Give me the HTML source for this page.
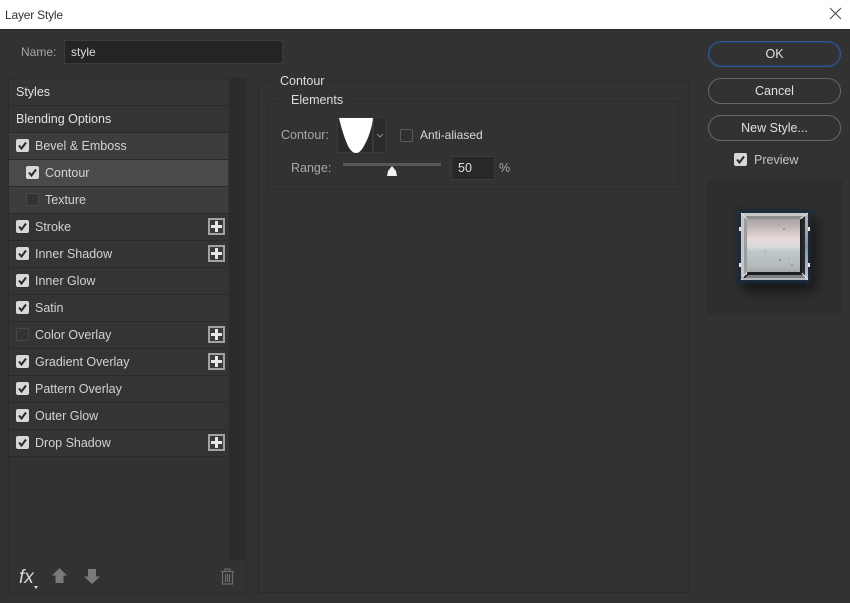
<!DOCTYPE html>
<html><head><meta charset="utf-8">
<style>
html,body{margin:0;padding:0;width:850px;height:603px;overflow:hidden;background:#323232;}
body{position:relative;font-family:"Liberation Sans",sans-serif;font-size:12.5px;color:#d4d4d4;}
.a{position:absolute;white-space:nowrap;}
#title{left:0;top:0;width:850px;height:29px;background:#fff;}
.row{position:absolute;left:9px;width:219px;height:26px;background:#343434;border-bottom:1px solid #2a2a2a;}
.row span{position:absolute;top:5px;line-height:16px;white-space:nowrap;color:#d2d2d2;}
.cb{position:absolute;top:6px;width:13px;height:13px;border-radius:2px;background:#d8d8d8;}
.cb svg{position:absolute;left:0;top:0;}
.cb.off{background:#333;border:1px solid #484848;width:11px;height:11px;}
.plus{position:absolute;left:199px;top:4px;width:13px;height:13px;border:2px solid #a2a2a2;background:#3a3a3a;}
.plus:before{content:"";position:absolute;left:1px;top:5px;width:11px;height:3px;background:#e8e8e8;}
.plus:after{content:"";position:absolute;left:5px;top:1px;width:3px;height:11px;background:#e8e8e8;}
.btn{position:absolute;left:708px;width:131px;height:24px;border:1px solid #666;border-radius:13px;text-align:center;line-height:24px;color:#e0e0e0;}
.box{position:absolute;border:1px solid #2b2b2b;box-sizing:border-box;}
</style></head><body>
<div class="a" id="title"></div>
<div class="a" style="left:5px;top:7px;color:#333;font-size:12px;letter-spacing:-.2px;line-height:16px;">Layer Style</div>
<svg class="a" style="left:829px;top:7px" width="13" height="13" viewBox="0 0 13 13"><path d="M1 1L12 12M12 1L1 12" stroke="#444" stroke-width="1" fill="none"/></svg>
<div class="a" style="left:0;top:29px;width:850px;height:1px;background:#262626;"></div>

<div class="a" style="left:21px;top:44px;color:#a6a6a6;line-height:16px;font-size:12px;">Name:</div>
<div class="a" style="left:64px;top:40px;width:217px;height:22px;background:#242424;border:1px solid #3c3c3c;"></div>
<div class="a" style="left:71px;top:44px;color:#dcdcdc;line-height:16px;font-size:12px;">style</div>

<div class="box" style="left:8px;top:78px;width:239px;height:516px;"></div>
<div class="a" style="left:229px;top:79px;width:16px;height:481px;background:#2b2b2b;"></div>

<div class="row" style="top:79px;"><span style="left:7px;color:#e2e2e2;">Styles</span></div>
<div class="row" style="top:106px;"><span style="left:7px;color:#e2e2e2;">Blending Options</span></div>
<div class="row" style="top:133px;background:#3d3d3d;"><div class="cb" style="left:7px"><svg width="13" height="13"><path d="M3 6.5L5.5 9.5L10 3.5" stroke="#2a2a2a" stroke-width="2" fill="none"/></svg></div><span style="left:26px">Bevel &amp; Emboss</span></div>
<div class="row" style="top:160px;background:#4a4a4a;"><div class="cb" style="left:17px"><svg width="13" height="13"><path d="M3 6.5L5.5 9.5L10 3.5" stroke="#2a2a2a" stroke-width="2" fill="none"/></svg></div><span style="left:36px">Contour</span></div>
<div class="row" style="top:187px;background:#3d3d3d;"><div class="cb off" style="left:17px"></div><span style="left:36px">Texture</span></div>
<div class="row" style="top:214px;"><div class="cb" style="left:7px"><svg width="13" height="13"><path d="M3 6.5L5.5 9.5L10 3.5" stroke="#2a2a2a" stroke-width="2" fill="none"/></svg></div><span style="left:26px">Stroke</span><div class="plus"></div></div>
<div class="row" style="top:241px;"><div class="cb" style="left:7px"><svg width="13" height="13"><path d="M3 6.5L5.5 9.5L10 3.5" stroke="#2a2a2a" stroke-width="2" fill="none"/></svg></div><span style="left:26px">Inner Shadow</span><div class="plus"></div></div>
<div class="row" style="top:268px;"><div class="cb" style="left:7px"><svg width="13" height="13"><path d="M3 6.5L5.5 9.5L10 3.5" stroke="#2a2a2a" stroke-width="2" fill="none"/></svg></div><span style="left:26px">Inner Glow</span></div>
<div class="row" style="top:295px;"><div class="cb" style="left:7px"><svg width="13" height="13"><path d="M3 6.5L5.5 9.5L10 3.5" stroke="#2a2a2a" stroke-width="2" fill="none"/></svg></div><span style="left:26px">Satin</span></div>
<div class="row" style="top:322px;"><div class="cb off" style="left:7px"></div><span style="left:26px">Color Overlay</span><div class="plus"></div></div>
<div class="row" style="top:349px;"><div class="cb" style="left:7px"><svg width="13" height="13"><path d="M3 6.5L5.5 9.5L10 3.5" stroke="#2a2a2a" stroke-width="2" fill="none"/></svg></div><span style="left:26px">Gradient Overlay</span><div class="plus"></div></div>
<div class="row" style="top:376px;"><div class="cb" style="left:7px"><svg width="13" height="13"><path d="M3 6.5L5.5 9.5L10 3.5" stroke="#2a2a2a" stroke-width="2" fill="none"/></svg></div><span style="left:26px">Pattern Overlay</span></div>
<div class="row" style="top:403px;"><div class="cb" style="left:7px"><svg width="13" height="13"><path d="M3 6.5L5.5 9.5L10 3.5" stroke="#2a2a2a" stroke-width="2" fill="none"/></svg></div><span style="left:26px">Outer Glow</span></div>
<div class="row" style="top:430px;"><div class="cb" style="left:7px"><svg width="13" height="13"><path d="M3 6.5L5.5 9.5L10 3.5" stroke="#2a2a2a" stroke-width="2" fill="none"/></svg></div><span style="left:26px">Drop Shadow</span><div class="plus"></div></div>

<div class="a" style="left:19px;top:566px;font-style:italic;font-size:19px;line-height:24px;color:#d8d8d8;">fx</div>
<div class="a" style="left:34px;top:586px;width:0;height:0;border-left:2px solid transparent;border-right:2px solid transparent;border-top:3px solid #ddd;"></div>
<svg class="a" style="left:52px;top:568px" width="15" height="16"><path d="M7.5 0L15 7.5H11.5V15H3.5V7.5H0Z" fill="#7a7a7a"/></svg>
<svg class="a" style="left:84px;top:569px" width="16" height="16"><path d="M4 0H12V7.5H16L8 15L0 7.5H4Z" fill="#7a7a7a"/></svg>
<svg class="a" style="left:220px;top:568px" width="15" height="17"><path d="M1 3.5H14M5 3V1H10V3M2.5 4V16H12.5V4M5.5 6V14M7.5 6V14M9.5 6V14" stroke="#6c6c6c" stroke-width="1.2" fill="none"/></svg>

<div class="box" style="left:258px;top:81px;width:431px;height:512px;"></div>
<div class="a" style="left:274px;top:73px;padding:0 6px;background:#323232;color:#dcdcdc;line-height:16px;">Contour</div>
<div class="box" style="left:268px;top:101px;width:411px;height:89px;"></div>
<div class="a" style="left:285px;top:92px;padding:0 6px;background:#323232;color:#dcdcdc;line-height:16px;">Elements</div>
<div class="a" style="left:281px;top:127px;color:#a8a8a8;line-height:16px;">Contour:</div>
<div class="a" style="left:337px;top:117px;width:36px;height:36px;background:#2a2a2a;border:1px solid #3a3a3a;box-sizing:border-box;"></div>
<svg class="a" style="left:339px;top:117px" width="34" height="36"><path d="M0 1H34C33 10 30 20 25 29C22 34 20 36 17 36C14 36 12 34 9 29C5 20 2 10 0 1Z" fill="#fff"/></svg>
<div class="a" style="left:373px;top:117px;width:13px;height:36px;background:#2a2a2a;border:1px solid #3a3a3a;box-sizing:border-box;"></div>
<svg class="a" style="left:376px;top:133px" width="8" height="6"><path d="M1 1L4 4L7 1" stroke="#8c8c8c" fill="none"/></svg>
<div class="a" style="left:400px;top:129px;width:11px;height:11px;border:1px solid #5a5a5a;border-radius:2px;background:#303030;"></div>
<div class="a" style="left:420px;top:127px;color:#d8d8d8;line-height:16px;font-size:12px;">Anti-aliased</div>
<div class="a" style="left:291px;top:160px;color:#a8a8a8;line-height:16px;">Range:</div>
<div class="a" style="left:343px;top:163px;width:98px;height:3px;background:#585858;"></div>
<svg class="a" style="left:386px;top:166px" width="12" height="11"><path d="M6 0L10 5L11 10H1L2 5Z" fill="#f2f2f2"/></svg>
<div class="a" style="left:451px;top:156px;width:42px;height:22px;background:#282828;border:1px solid #3c3c3c;"></div>
<div class="a" style="left:458px;top:160px;color:#e0e0e0;line-height:16px;">50</div>
<div class="a" style="left:499px;top:160px;color:#a8a8a8;line-height:16px;">%</div>

<div class="btn" style="top:41px;border-color:#2f5a96;box-shadow:inset 0 0 0 1px #2a4166;">OK</div>
<div class="btn" style="top:78px;">Cancel</div>
<div class="btn" style="top:115px;">New Style...</div>
<div class="cb a" style="left:734px;top:153px;"><svg width="13" height="13"><path d="M3 6.5L5.5 9.5L10 3.5" stroke="#2a2a2a" stroke-width="2" fill="none"/></svg></div>
<div class="a" style="left:754px;top:152px;color:#c4c4c4;line-height:16px;">Preview</div>

<div class="a" style="left:707px;top:179px;width:136px;height:136px;background:#2e2e2e;"></div>
<div class="a" style="left:741px;top:213px;width:67px;height:67px;box-shadow:0 0 3px 3px #1a2c40,5px 8px 11px 3px rgba(0,0,0,.5);"></div>
<svg class="a" style="left:739px;top:211px" width="72" height="72" viewBox="0 0 72 72">
<defs><linearGradient id="f" x1="0" y1="0" x2="0" y2="1"><stop offset="0" stop-color="#a9a5a4"/><stop offset=".14" stop-color="#bfb5b3"/><stop offset=".36" stop-color="#e6dad8"/><stop offset=".52" stop-color="#dadada"/><stop offset=".62" stop-color="#bdc7c9"/><stop offset=".88" stop-color="#b5bbbd"/><stop offset="1" stop-color="#a5a9ab"/></linearGradient>
<linearGradient id="s" x1="0" y1="0" x2="0" y2="1"><stop offset="0" stop-color="#bdb5b3"/><stop offset=".5" stop-color="#8f9294"/><stop offset="1" stop-color="#c4c8ca"/></linearGradient></defs>
<rect x="2" y="2" width="67" height="67" fill="#1c1f22"/>
<path d="M2 2H69L63 8H8V62L2 69Z" fill="#8e8c8c"/>
<path d="M2 2H69V5H5V66H2Z" fill="#c8c8c8"/>
<path d="M4 69H69V64H9Z" fill="#7d8082"/>
<path d="M2 67H69V69H2Z" fill="#b4b8ba"/>
<path d="M66 2H69V69H66Z" fill="url(#s)"/>
<path d="M63 8H66V64H63Z" fill="#26292c"/>
<path d="M8 61H63V64H8Z" fill="#1b1d1f"/>
<path d="M5 5H8V64H5Z" fill="#9c9e9f"/>
<rect x="8" y="8" width="53" height="53" fill="url(#f)"/>
<path d="M8 8L2 2M61 8L69 2M8 61L2 69M63 62L69 69" stroke="#e4e4e4" stroke-width="1"/>
<rect x="0" y="16" width="2" height="4" fill="#dfe6ea"/><rect x="0" y="52" width="2" height="4" fill="#dfe6ea"/>
<rect x="69" y="16" width="2" height="4" fill="#dfe6ea"/><rect x="69" y="52" width="2" height="4" fill="#dfe6ea"/>
<g fill="#8a8a8a"><circle cx="45" cy="18" r="1"/><circle cx="40" cy="14" r=".6"/><circle cx="41" cy="49" r="1.1"/><circle cx="53" cy="54" r=".9"/><circle cx="26" cy="40" r=".6"/><circle cx="50" cy="47" r=".6"/></g>
</svg>
</body></html>
